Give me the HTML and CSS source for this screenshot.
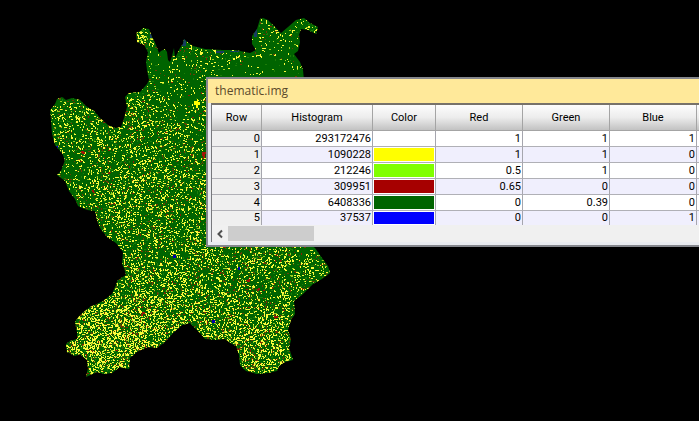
FILE: index.html
```html
<!DOCTYPE html>
<html lang="en">
<head>
<meta charset="utf-8">
<title>thematic.img</title>
<link rel="stylesheet" href="styles.css">
</head>
<body>
<main class="viewer">
  <svg class="map" width="699" height="421" viewBox="0 0 699 421" shape-rendering="crispEdges" aria-hidden="true">
    <clipPath id="region">
      <path d="M50 110L55 104L57 99L62 97L66 100L72 98L80 100L86 106L94 111L100 118L108 125L115 128L121 127L124 118L127 107L125 97L129 93L140 92L147 84L149 80L147 70L146 62L148 52L144 45L137 42L136 33L140 31L143 28L149 29L152 37L156 45L159 53L161 51L165 49L167 52L168 60L170 62L172 56L174 48L175 58L180 48L183 44L184 39L186 41L193 46L205 49L222 50L235 50L250 53L256 50L252 44L252 36L257 29L260 19L263 18L268 20L275 27L281 33L288 27L296 20L304 18L310 23L318 27L316 34L308 30L301 29L299 35L300 42L298 51L294 54L300 62L303 70L304 80L304 240L315 248L322 258L328 266L330 273L322 279L313 284L302 295L294 301L295 314L291 320L288 330L291 340L289 348L293 360L285 362L279 366L277 371L268 373L257 374L246 371L240 365L239 355L236 346L232 344L225 339L217 340L205 339L200 333L190 323L182 325L172 334L165 342L157 348L148 347L137 352L130 358L129 369L120 367L112 373L104 374L97 372L86 377L88 368L87 360L80 354L75 356L67 352L66 344L70 341L77 339L77 332L75 322L80 315L90 307L103 301L112 294L118 280L126 275L124 268L122 264L123 252L116 243L107 237L100 228L97 220L95 211L87 210L78 206L75 199L69 191L65 181L57 175L61 171L65 160L62 153L55 145L52 134L51 120Z"/>
    </clipPath>
    <g clip-path="url(#region)">
      <rect width="699" height="421" fill="#006400"/>
      <g id="pixels"></g>
      <path fill="#ff0" d="M194 101h3v-2h1v3h2v3h-2v3h-2v-3h-2z"/>
      <path fill="#a01408" d="M202 152h4v2h-1v4h-2v-2h-1zM81 151h3v1h1v2h-3v-1h-1zM246 280h2v-1h2v3h-3v-1h-1zM258 288h2v2h-1v1h-2v-2h1zM142 312h3v2h-2v2h-2v-2h1zM274 316h4v2h-2v1h-1v-1h-1zM92 190h2v2h1v1h-2v-1h-1z"/>
      <path fill="#173d63" d="M254 29h3v8h-3zM216 51h8v2h-8zM182 38h4v8h-4zM150 34h2v4h-2zM230 51h9v1h-9z"/>
      <path fill="#00a" d="M173 255h3v3h-3zM238 267h2v3h-2zM212 320h3v3h-3zM56 146h2v3h-2z"/>
    </g>
  </svg>

  <section class="window" aria-label="Raster attributes">
    <header class="titlebar">thematic.img</header>
    <div class="grid">
      <table>
        <colgroup><col class="c-row"><col class="c-hist"><col class="c-color"><col class="c-band"><col class="c-band"><col class="c-band"><col class="c-band"></colgroup>
        <thead>
          <tr><th>Row</th><th>Histogram</th><th>Color</th><th>Red</th><th>Green</th><th>Blue</th><th></th></tr>
        </thead>
        <tbody>
          <tr><th scope="row">0</th><td>293172476</td><td class="swatch white"></td><td>1</td><td>1</td><td>1</td><td></td></tr>
          <tr><th scope="row">1</th><td>1090228</td><td class="swatch yellow"></td><td>1</td><td>1</td><td>0</td><td></td></tr>
          <tr><th scope="row">2</th><td>212246</td><td class="swatch lime"></td><td>0.5</td><td>1</td><td>0</td><td></td></tr>
          <tr><th scope="row">3</th><td>309951</td><td class="swatch red"></td><td>0.65</td><td>0</td><td>0</td><td></td></tr>
          <tr><th scope="row">4</th><td>6408336</td><td class="swatch green"></td><td>0</td><td>0.39</td><td>0</td><td></td></tr>
          <tr><th scope="row">5</th><td>37537</td><td class="swatch blue"></td><td>0</td><td>0</td><td>1</td><td></td></tr>
        </tbody>
      </table>
      <div class="scrollbar">
        <button class="arrow" type="button" aria-label="Scroll left"><svg width="8" height="10" viewBox="0 0 8 10"><path d="M6 1.5L2.5 5L6 8.5" fill="none" stroke="#505050" stroke-width="2"/></svg></button>
        <div class="thumb"></div>
      </div>
    </div>
  </section>
</main>
<script src="map.js"></script>
</body>
</html>
```
FILE: styles.css
```css
* { box-sizing: border-box; }

body {
  margin: 0;
  background: #000;
}

.viewer {
  position: relative;
  min-height: 100vh;
  overflow: hidden;
}

.map {
  display: block;
}

/* Floating attribute window, running off the right edge of the viewer */
.window {
  position: absolute;
  left: 206px;
  top: 77px;
  right: -30px;
  padding: 0 3px 3px;
  border: 2px solid #85878d;
  background: #e9ebf0;
}

.titlebar {
  height: 24px;
  margin: 0 -3px;
  padding-left: 7px;
  background: #ffe99a;
  color: #5b4a2c;
  font: 12px/24px "Open Sans", sans-serif;
}

.grid {
  overflow: hidden;
  border-top: 2px solid #77726a;
  border-left: 1px solid #77787c;
  background: #f0f0f0;
}

table {
  table-layout: fixed;
  width: 571px;
  border-collapse: separate;
  border-spacing: 0;
  color: #000;
  font: 11px/15px Roboto, sans-serif;
}

.c-row { width: 50px; }
.c-hist { width: 111px; }
.c-color { width: 63px; }
.c-band { width: 87px; }

th, td {
  height: 16px;
  padding: 0 1px 0 0;
  border-right: 1px solid #a6a6ae;
  border-bottom: 1px solid #b0b0b6;
  font-weight: normal;
  text-align: right;
}

thead th {
  height: 26px;
  padding: 0;
  border-color: #a4a4a4;
  background: linear-gradient(#fdfdfd, #ececec 50%, #c2c2c2);
  text-align: center;
}

tbody th { background: #efefef; }
tbody td { background: #fff; }
tbody tr:nth-child(even) td { background-color: #f0effd; }
tbody tr:last-child > * {
  height: 14px;
  border-bottom: 0;
  line-height: 14px;
}

tbody td.swatch { box-shadow: inset 0 0 0 1px #fff; }
tbody tr td.white { background: #fff; }
tbody tr td.yellow { background-color: #ff0; }
tbody tr td.lime { background-color: #80ff00; }
tbody tr td.red { background-color: #a60000; }
tbody tr td.green { background-color: #006400; }
tbody tr td.blue { background-color: #00f; }

.scrollbar {
  display: flex;
  height: 17px;
  padding-top: 1px;
  background: #f0f0f0;
}

.arrow {
  display: flex;
  align-items: center;
  justify-content: center;
  width: 16px;
  padding: 0;
  border: 0;
  background: none;
}

.thumb {
  width: 86px;
  height: 15px;
  background: #cdcdcd;
}
```
FILE: map.js
```js
// Scatters small land cover patches over the forest region.
(function () {
  var seed = 20177;
  function rand() {
    seed = (seed * 1664525 + 1013904223) % 4294967296;
    return seed / 4294967296;
  }
  // Each cluster: x, y, radius, added density
  var clusters = [
    [100, 340, 60, 0.20], [265, 355, 42, 0.15], [160, 310, 60, 0.07],
    [75, 125, 35, 0.04], [170, 200, 55, 0.05], [115, 190, 40, 0.03],
    [135, 115, 20, 0.09], [290, 255, 28, 0.08], [210, 320, 40, 0.08],
    [142, 35, 12, 0.10], [230, 80, 60, -0.04], [160, 55, 14, -0.07], [280, 70, 35, -0.05]
  ];
  // Small patches where speckles bunch together, and gaps between them
  for (var i = 0; i < 160; i++) {
    clusters.push([50 + rand() * 280, 20 + rand() * 350, 3 + rand() * 6, rand() * 0.16 - 0.07]);
  }
  function density(x, y) {
    var d = 0.085;
    clusters.forEach(function (c) {
      var dx = (x - c[0]) / c[2], dy = (y - c[1]) / c[2], q = dx * dx + dy * dy;
      if (q < 9) d += c[3] * Math.exp(-q);
    });
    return Math.max(d, 0.015);
  }
  var paths = { "#1c7c08": "", "#6c3c04": "", "#8c1c04": "", "#9ccc20": "", "#fafa3c": "" };
  for (var y = 16; y < 380; y++) {
    for (var x = 48; x < 334; x++) {
      var d = density(x, y), r = rand(), size = rand(), color = null;
      if (r < d * 0.85) color = "#fafa3c";
      else if (r < d) color = "#9ccc20";
      else if (r < d * 1.2) color = "#6c3c04";
      else if (r < d * 1.25) color = "#8c1c04";
      else if (r < d * 1.5) color = "#1c7c08";
      if (color) {
        var w = size < 0.3 ? 2 : 1, h = size > 0.75 ? 2 : 1;
        paths[color] += "M" + x + " " + y + "h" + w + "v" + h + "h-" + w + "z";
      }
    }
  }
  var layer = document.getElementById("pixels");
  Object.keys(paths).forEach(function (color) {
    var p = document.createElementNS("http://www.w3.org/2000/svg", "path");
    p.setAttribute("fill", color);
    p.setAttribute("d", paths[color]);
    layer.appendChild(p);
  });
})();
```
